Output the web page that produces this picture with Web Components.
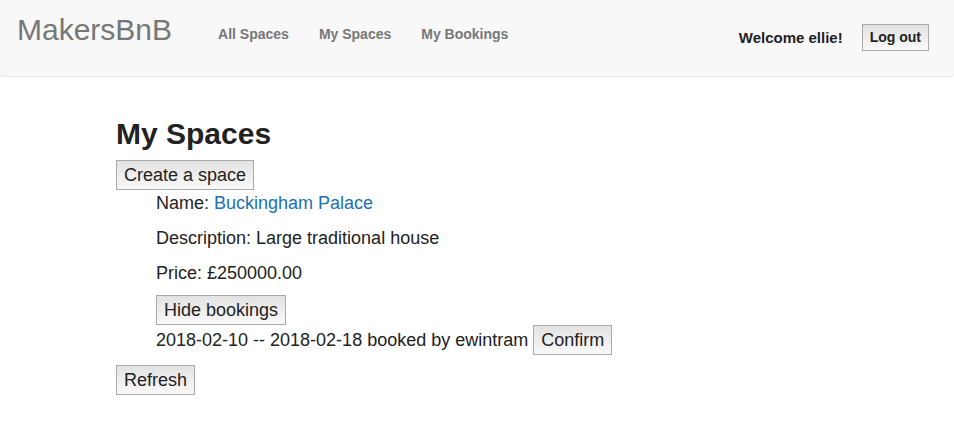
<!DOCTYPE html>
<html lang="en">
<head>
<meta charset="utf-8">
<meta name="viewport" content="width=device-width, initial-scale=1">
<title>MakersBnB</title>
<style>
body { margin: 0; background: #fff; color: #222; font: 18px/25px "Liberation Sans", Arial, sans-serif; }
</style>
</head>
<body>
<bnb-app></bnb-app>
<script>
const define = (name, html) => {
  const template = document.createElement('template');
  template.innerHTML = html;
  customElements.define(name, class extends HTMLElement {
    constructor() {
      super();
      this.attachShadow({ mode: 'open' }).append(template.content.cloneNode(true));
    }
  });
};

define('bnb-button', `
  <style>
    :host { display: inline-block; vertical-align: middle; }
    button { display: block; margin: 0; padding: var(--button-padding, 2px 7px 1px); border: 1px solid #aaa; border-radius: 0;
      background: linear-gradient(#e2e2e2, #f9f9f9); color: #222; font: inherit; cursor: pointer; }
  </style>
  <button type="button"><slot></slot></button>`);

define('bnb-header', `
  <style>
    :host { display: flex; align-items: flex-start; box-sizing: border-box; padding: 14px 25px 25px 17px;
      background: #f8f8f8; border-bottom: 1px solid #e7e7e7; border-radius: 0 0 4px 4px; }
    a { color: #777; text-decoration: none; }
    .brand { font-size: 30px; line-height: 32px; }
    nav { display: flex; gap: 30px; margin: 10px 0 0 46px; font-size: 14px; line-height: 20px; font-weight: bold; }
    .account { display: flex; align-items: center; gap: 19px; margin: 10px 0 0 auto; font-size: 15px; line-height: 20px; font-weight: bold; }
    bnb-button { --button-padding: 2px 7px 3px; font-size: 14px; }
  </style>
  <a class="brand" href="#">MakersBnB</a>
  <nav><a href="#all">All Spaces</a><a href="#spaces">My Spaces</a><a href="#bookings">My Bookings</a></nav>
  <div class="account"><span>Welcome ellie!</span><bnb-button>Log out</bnb-button></div>`);

define('bnb-space', `
  <style>
    :host { display: block; padding-left: 40px; margin-bottom: 10px; }
    p { margin: 0 0 9px; padding-top: 1px; }
    a { color: #1c6fb5; text-decoration: none; }
    .booking { display: flex; flex-wrap: wrap; align-items: center; gap: 5px; }
    .hide { display: block; width: fit-content; }
  </style>
  <p>Name: <a href="#space"><slot name="name"></slot></a></p>
  <p>Description: <slot name="description"></slot></p>
  <p>Price: <slot name="price"></slot></p>
  <bnb-button class="hide">Hide bookings</bnb-button>
  <div class="booking"><slot name="booking"></slot><bnb-button>Confirm</bnb-button></div>`);

define('bnb-app', `
  <style>
    :host { display: block; }
    main { max-width: 722px; margin: 0 auto; padding: 40px 16px; }
    h1 { margin: 0 0 10px; font-size: 30px; line-height: 33px; font-weight: bold; }
    .action { display: block; width: fit-content; }
  </style>
  <header><bnb-header></bnb-header></header>
  <main>
    <h1>My Spaces</h1>
    <bnb-button class="action">Create a space</bnb-button>
    <bnb-space>
      <span slot="name">Buckingham Palace</span>
      <span slot="description">Large traditional house</span>
      <span slot="price">£250000.00</span>
      <span slot="booking">2018-02-10 -- 2018-02-18 booked by ewintram</span>
    </bnb-space>
    <bnb-button class="action">Refresh</bnb-button>
  </main>`);
</script>
</body>
</html>
